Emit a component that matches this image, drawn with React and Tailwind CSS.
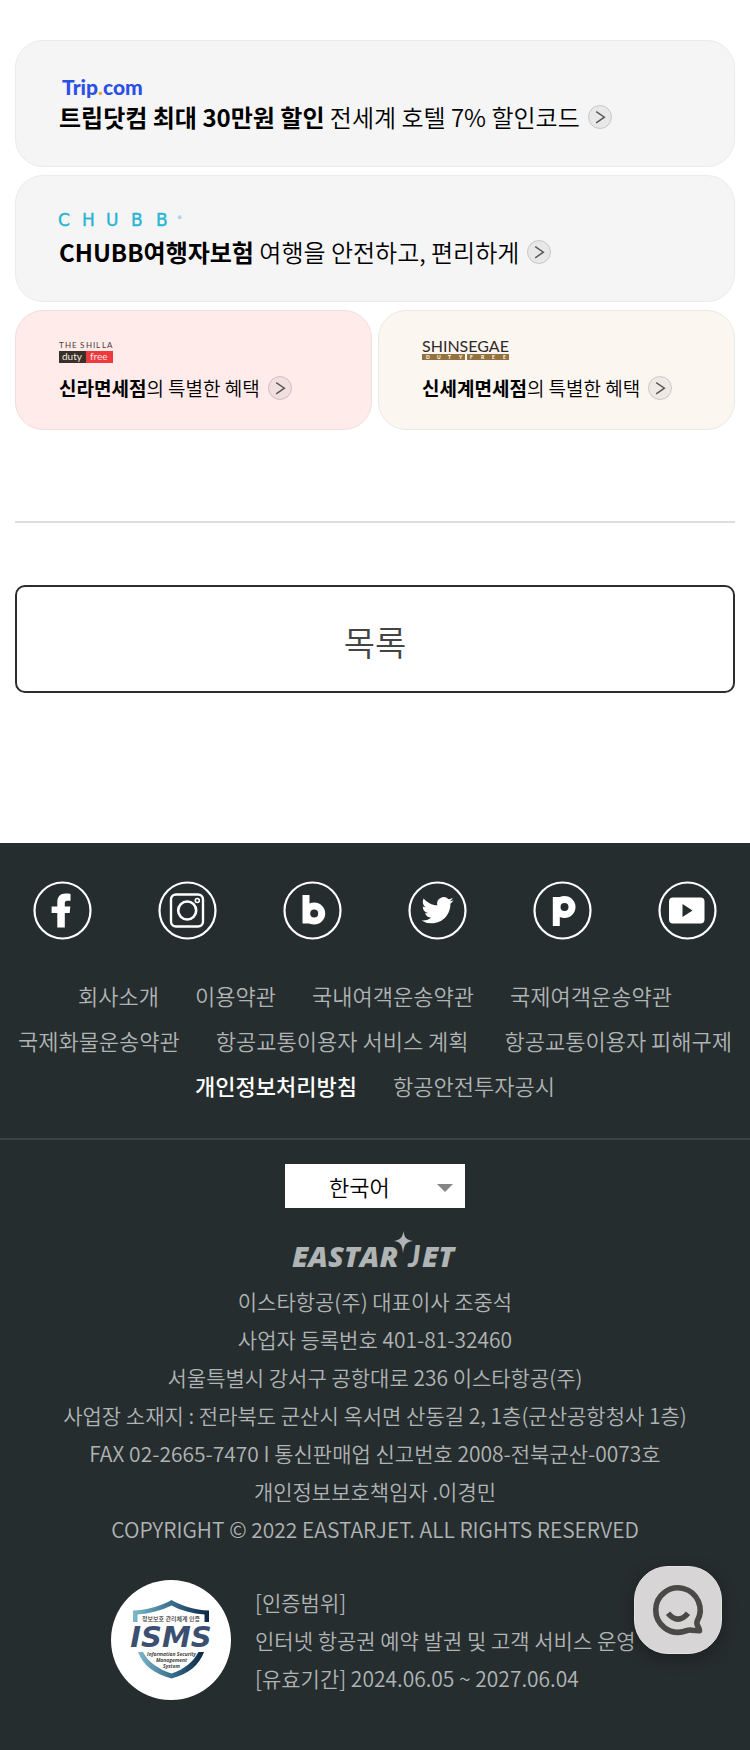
const kr = "font-['Noto_Sans_CJK_KR','Noto_Sans',sans-serif]";

function GoArrow() {
  return (
    <svg viewBox="0 0 24 24" className="size-6 shrink-0" aria-hidden="true">
      <circle cx="12" cy="12" r="11.5" fill="#000" fillOpacity="0.05" stroke="#000" strokeOpacity="0.16" />
      <path d="M8.2 6.6 16.4 12.2 8.2 17.8" fill="none" stroke="#555" strokeWidth="1.4" />
    </svg>
  );
}

function TripLogo() {
  return (
    <svg viewBox="0 0 90 24" className="h-6 w-[90px] overflow-visible" role="img" aria-label="Trip.com">
      <text x="3" y="18" className="font-['Lato',sans-serif] text-[21px] font-black" fill="#2b50e8">
        Trip<tspan fill="#f5a81c">.</tspan>com
      </text>
    </svg>
  );
}

function ChubbLogo() {
  return (
    <svg viewBox="0 0 124 16" className="h-4 w-[124px] overflow-visible" role="img" aria-label="CHUBB">
      <text x="-1 23 47 72 97" y="14" className="font-['DejaVu_Sans',sans-serif] text-[17px]" fill="#27b5d3" stroke="#27b5d3" strokeWidth="0.4">CHUBB</text>
      <text x="118" y="7" className="font-['DejaVu_Sans',sans-serif] text-[5px]" fill="#27b5d3">®</text>
    </svg>
  );
}

function ShillaLogo() {
  return (
    <svg viewBox="0 0 56 24" className="h-6 w-14 overflow-visible" role="img" aria-label="The Shilla duty free">
      <g className="font-['Lato',sans-serif]" fill="#4d3b38">
        <text x="0 6 13" y="8" className="text-[8px]">THE</text>
        <text x="21 27 34 37 43 48" y="8" className="text-[8px]">SHILLA</text>
      </g>
      <rect x="0" y="11" width="27" height="12" fill="#3a3028" />
      <rect x="27" y="11" width="27" height="12" fill="#ee3a3e" />
      <text x="3" y="20" className="font-['Lato',sans-serif] text-[10px]" fill="#f4e9e4">duty</text>
      <text x="31" y="20" className="font-['Lato',sans-serif] text-[10px]" fill="#fde4e2">free</text>
    </svg>
  );
}

function ShinsegaeLogo() {
  return (
    <svg viewBox="0 0 90 24" className="h-6 w-[90px] overflow-visible" role="img" aria-label="Shinsegae duty free">
      <text x="0" y="12" className="font-['Lato',sans-serif] text-[16px]" fill="#2e2a28">SHINSEGAE</text>
      <path d="M0 14h43v6H0zM45 14h42v6H45z" fill="#94723f" />
      <text x="4 15 26 37 48 59 70 81" y="19" className="font-['Lato',sans-serif] text-[5px] font-bold" fill="#fff">DUTYFREE</text>
    </svg>
  );
}

function WideBanner({ logo, strong, text, spacing }) {
  return (
    <a href="#" className="flex h-[127px] flex-col justify-center rounded-[28px] border border-[#ebebeb] bg-[#f5f5f5] pt-0.5 pl-[43px] text-black">
      {logo}
      <span className={`flex items-center gap-2 text-[24px] leading-8 font-[350] ${spacing}`}>
        <span>
          <b className="font-bold">{strong}</b> {text}
        </span>
        <GoArrow />
      </span>
    </a>
  );
}

function DutyFreeBanner({ logo, strong, tone }) {
  return (
    <a href="#" className={`flex h-[120px] flex-1 flex-col justify-center gap-2 rounded-[28px] border pt-1 pl-[43px] text-black ${tone}`}>
      {logo}
      <span className="flex items-center gap-2 text-[19px] leading-8 font-[350]">
        <span>
          <b className="font-bold">{strong}</b>의 특별한 혜택
        </span>
        <GoArrow />
      </span>
    </a>
  );
}

const socials = [
  {
    name: "Facebook",
    art: <path transform="translate(-1.2 0)" fill="#fff" d="M38.700 12.900v6.800h-3.400c-1.700 0-2.300.9-2.300 2.400V25.500h5.500l-.6 6.500H33V46.500h-7.500V32h-5.700v-6.500h5.700v-4.300c0-5.400 3-8.600 8.400-8.600 1.800 0 3.800.1 4.800.3z" />,
  },
  {
    name: "Instagram",
    art: (
      <g fill="none" stroke="#fff">
        <rect x="13" y="13.500" width="32" height="32" rx="5" strokeWidth="2.400" />
        <circle cx="29.200" cy="29.500" r="9" strokeWidth="2.600" />
        <circle cx="39.300" cy="19.500" r="2" strokeWidth="1.600" />
      </g>
    ),
  },
  {
    name: "Band",
    art: (
      <g fill="none" stroke="#fff">
        <path d="M23 14v28.500" strokeWidth="7" />
        <circle cx="31.200" cy="32.500" r="7.500" strokeWidth="7" />
      </g>
    ),
  },
  {
    name: "Twitter",
    art: (
      <path
        transform="translate(13.500 13.200) scale(1.340)"
        fill="#fff"
        d="M23.953 4.570a10 10 0 01-2.825.775 4.958 4.958 0 002.163-2.723c-.951.555-2.005.959-3.127 1.184a4.920 4.920 0 00-8.384 4.482C7.690 8.095 4.067 6.130 1.640 3.162a4.822 4.822 0 00-.666 2.475c0 1.710.87 3.213 2.188 4.096a4.904 4.904 0 01-2.228-.616v.06a4.923 4.923 0 003.946 4.827 4.996 4.996 0 01-2.212.085 4.936 4.936 0 004.604 3.417 9.867 9.867 0 01-6.102 2.105c-.39 0-.779-.023-1.170-.067a13.995 13.995 0 007.557 2.209c9.053 0 13.998-7.496 13.998-13.985 0-.21 0-.42-.015-.63A9.935 9.935 0 0024 4.590z"
      />
    ),
  },
  {
    name: "Post",
    art: (
      <g fill="none" stroke="#fff">
        <path d="M23.300 16V45" strokeWidth="7" />
        <circle cx="31.500" cy="26" r="7.500" strokeWidth="7" />
      </g>
    ),
  },
  {
    name: "YouTube",
    art: <path fill="#fff" fillRule="evenodd" d="M15 16.500h27.500a4 4 0 0 1 4 4v18a4 4 0 0 1-4 4H15a4 4 0 0 1-4-4v-18a4 4 0 0 1 4-4zM24.500 23v13l10-6.500z" />,
  },
];

const links = [
  "회사소개",
  "이용약관",
  "국내여객운송약관",
  "국제여객운송약관",
  "국제화물운송약관",
  "항공교통이용자 서비스 계획",
  "항공교통이용자 피해구제",
  "개인정보처리방침",
  "항공안전투자공시",
];

const company = [
  "이스타항공(주) 대표이사 조중석",
  "사업자 등록번호 401-81-32460",
  "서울특별시 강서구 공항대로 236 이스타항공(주)",
  "사업장 소재지 : 전라북도 군산시 옥서면 산동길 2, 1층(군산공항청사 1층)",
  "FAX 02-2665-7470 I 통신판매업 신고번호 2008-전북군산-0073호",
  "개인정보보호책임자 .이경민",
  "COPYRIGHT © 2022 EASTARJET. ALL RIGHTS RESERVED",
];

function EastarLogo() {
  return (
    <svg viewBox="0 0 168 40" className="h-10 w-[168px] overflow-visible" role="img" aria-label="EASTAR JET" fill="#b0b4b5">
      <text x="1" y="37" className="font-['Open_Sans',sans-serif] text-[29px] font-extrabold italic">EASTAR</text>
      <text x="117" y="37" className="font-['Lato',sans-serif] text-[30px] font-black italic">J</text>
      <text x="131" y="37" className="font-['Open_Sans',sans-serif] text-[29px] font-extrabold italic">ET</text>
      <path d="M112.500 1c.8 6.500 2.500 8.500 9.500 10-7 1-8.700 3.200-10 12-.8-8.500-2.500-11-9-12 6.500-1.500 8.500-3.500 9.500-10z" />
    </svg>
  );
}

function IsmsBadge() {
  return (
    <svg viewBox="0 0 120 120" className="size-[120px] shrink-0" role="img" aria-label="ISMS 정보보호 관리체계 인증">
      <defs>
        <linearGradient id="shield" x1="0" x2="1" y1="0" y2="0">
          <stop offset="0" stopColor="#7db9c9" />
          <stop offset="0.5" stopColor="#3a708f" />
          <stop offset="1" stopColor="#0b2744" />
        </linearGradient>
      </defs>
      <circle cx="60" cy="60" r="60" fill="#fff" />
      <path fill="url(#shield)" d="M22 42V30.500C37 30 50 26 60.500 20c10.500 6 22.500 10 37.500 10.500V42h-4.500v-7.500C81 33.500 70 30.500 60.500 25.500 50 30.500 39 33.500 26.500 34.500V42z" />
      <path fill="url(#shield)" d="M27 72h5c5 10 15 17 28.500 21.500C74 89 82 82 87.500 72H93c-5 13-15 22-32.500 26.500C43 94 32 85 27 72z" />
      <text x="60" y="41" textAnchor="middle" className="font-['Noto_Sans_CJK_KR',sans-serif] text-[6px] font-medium" fill="#333">정보보호 관리체계 인증</text>
      <text x="60" y="67" textAnchor="middle" className="font-['DejaVu_Sans',sans-serif] text-[29px] font-bold italic" fill="#3b5070">ISMS</text>
      <g textAnchor="middle" className="font-['Open_Sans',sans-serif] text-[5px] font-bold italic" fill="#444">
        <text x="60.500" y="76">Information Security</text>
        <text x="60.500" y="82">Management</text>
        <text x="60.500" y="88">System</text>
      </g>
    </svg>
  );
}

export default function App() {
  return (
    <div className={`flex min-h-screen flex-col bg-white ${kr}`}>
      <main className="px-[15px] pt-10">
        <section className="flex flex-col gap-2">
          <WideBanner logo={<TripLogo />} strong="트립닷컴 최대 30만원 할인" text="전세계 호텔 7% 할인코드" spacing="" />
          <WideBanner logo={<ChubbLogo />} strong="CHUBB여행자보험" text="여행을 안전하고, 편리하게" spacing="mt-2" />
          <div className="flex gap-[6px]">
            <DutyFreeBanner logo={<ShillaLogo />} strong="신라면세점" tone="border-[#efdfe0] bg-[#feebea]" />
            <DutyFreeBanner logo={<ShinsegaeLogo />} strong="신세계면세점" tone="border-[#ece9e5] bg-[#fbf6f0]" />
          </div>
        </section>
        <hr className="mt-[91px] border-t-2 border-[#ddd]" />
        <button type="button" className="mt-[62px] block h-[108px] w-full rounded-[10px] border-2 border-[#2d2d2d] pt-1 text-[34px] font-[350] text-[#444]">
          목록
        </button>
      </main>

      <footer className="mt-[150px] grow bg-[#262d2e] pb-12 text-[22px] font-[350] text-[#b0b4b5]">
        <nav aria-label="SNS" className="grid grid-cols-6 pt-[38px]">
          {socials.map((s) => (
            <a key={s.name} href="#" aria-label={s.name} className="flex justify-center">
              <svg viewBox="0 0 59 59" className="size-[59px]">
                <circle cx="29.500" cy="29.500" r="28" fill="none" stroke="#fff" strokeWidth="2.200" />
                {s.art}
              </svg>
            </a>
          ))}
        </nav>
        <nav aria-label="약관" className="mt-[33px] flex flex-wrap justify-center gap-x-9 px-2.5 leading-[45px]">
          {links.map((l) => (
            <a key={l} href="#" className={l === "개인정보처리방침" ? "font-medium text-white" : ""}>
              {l}
            </a>
          ))}
        </nav>
        <div className="mt-[30px] flex flex-col items-center border-t-2 border-[#3b4344] pt-6">
          <div className="relative">
            <select aria-label="언어 선택" className="h-11 w-[180px] appearance-none bg-white pl-11 text-black">
              <option>한국어</option>
            </select>
            <svg viewBox="0 0 16 8" className="pointer-events-none absolute top-5 right-3 h-2 w-4" aria-hidden="true">
              <path d="M0 0h16L8 8z" fill="#858585" />
            </svg>
          </div>
          <div className="mt-[22px]">
            <EastarLogo />
          </div>
          <address className="mt-3 text-center text-[21px] leading-[38px] not-italic">
            {company.map((line) => (
              <p key={line}>{line}</p>
            ))}
          </address>
          <div className="mt-8 flex w-full items-center gap-6 pl-[111px]">
            <IsmsBadge />
            <div className="text-[21px] leading-[38px]">
              <p>[인증범위]</p>
              <p>인터넷 항공권 예약 발권 및 고객 서비스 운영</p>
              <p>[유효기간] 2024.06.05 ~ 2027.06.04</p>
            </div>
          </div>
        </div>
      </footer>

      <button type="button" aria-label="채팅 상담" className="fixed right-7 bottom-24 size-[88px] rounded-[34px] border border-[#e4e2e2] bg-[#d7d5d5] shadow-[0_4px_16px_rgba(0,0,0,0.3)]">
        <svg viewBox="0 0 86 86" className="size-full" fill="none" stroke="#4a4948" strokeWidth="5.600">
          <path d="M62.200 54.100A22.200 22.200 0 1 0 48.700 64.500C52 63.500 54 62.500 57 63.200L64.500 63.600C64.600 60 60.500 58.500 62.200 54.100z" strokeLinejoin="round" />
          <path d="M33 46.300Q43 58 53 46.300" />
        </svg>
      </button>
    </div>
  );
}
